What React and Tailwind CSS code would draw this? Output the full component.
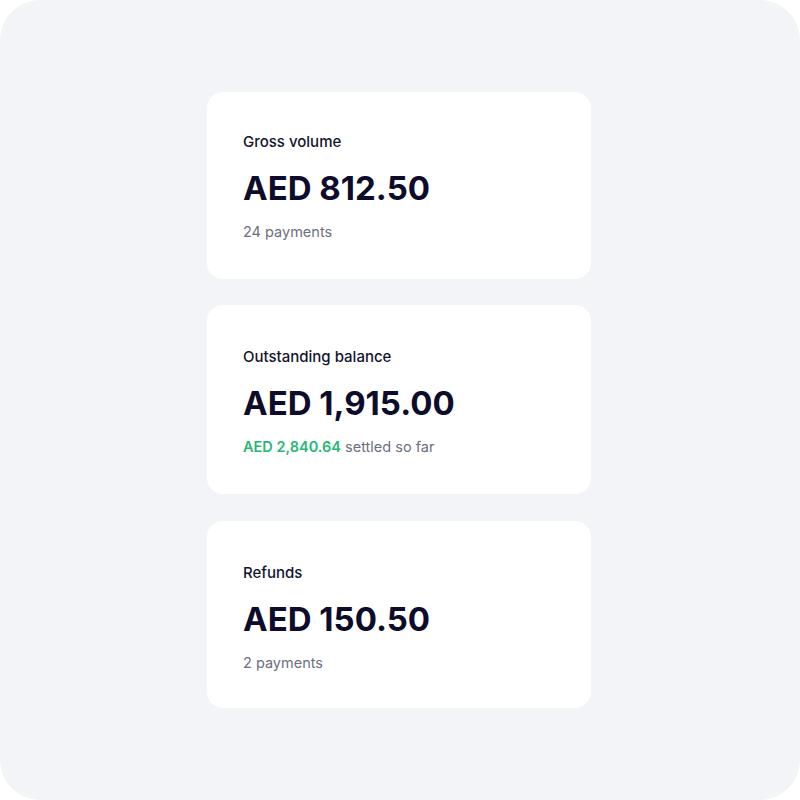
export default function App() {
  const font = { fontFamily: 'Inter, "Noto Sans", sans-serif' };
  return (
    <div className="w-[800px] h-[800px] bg-white">
      <div
        className="w-[800px] h-[800px] bg-[#f3f4f8] rounded-[40px] flex flex-col items-center pt-[92px] pr-[2px]"
        style={font}
      >
        <Card label="Gross volume" amount="AED 812.50" cls="h-[187px] pt-[40px]">
          <span className="text-[#6b6f80]">24 payments</span>
        </Card>
        <div className="h-[26px]" />
        <Card label="Outstanding balance" amount="AED 1,915.00" cls="h-[189px] pt-[42px]">
          <span className="text-[#27b874] font-semibold">AED 2,840.64</span>
          <span className="text-[#6b6f80]"> settled so far</span>
        </Card>
        <div className="h-[27px]" />
        <Card label="Refunds" amount="AED 150.50" cls="h-[187px] pt-[42px]">
          <span className="text-[#6b6f80]">2 payments</span>
        </Card>
      </div>
    </div>
  );
}

function Card({ label, amount, cls, children }) {
  return (
    <div className={`w-[384px] ${cls} bg-white rounded-2xl pl-9 flex flex-col`}>
      <div className="text-[15px] leading-5 font-medium text-[#14142e]">{label}</div>
      <div className="mt-[16px] text-[33px] leading-10 font-bold text-[#0d0d2b]">{amount}</div>
      <div className="mt-[14px] text-[14.5px] leading-5">{children}</div>
    </div>
  );
}
